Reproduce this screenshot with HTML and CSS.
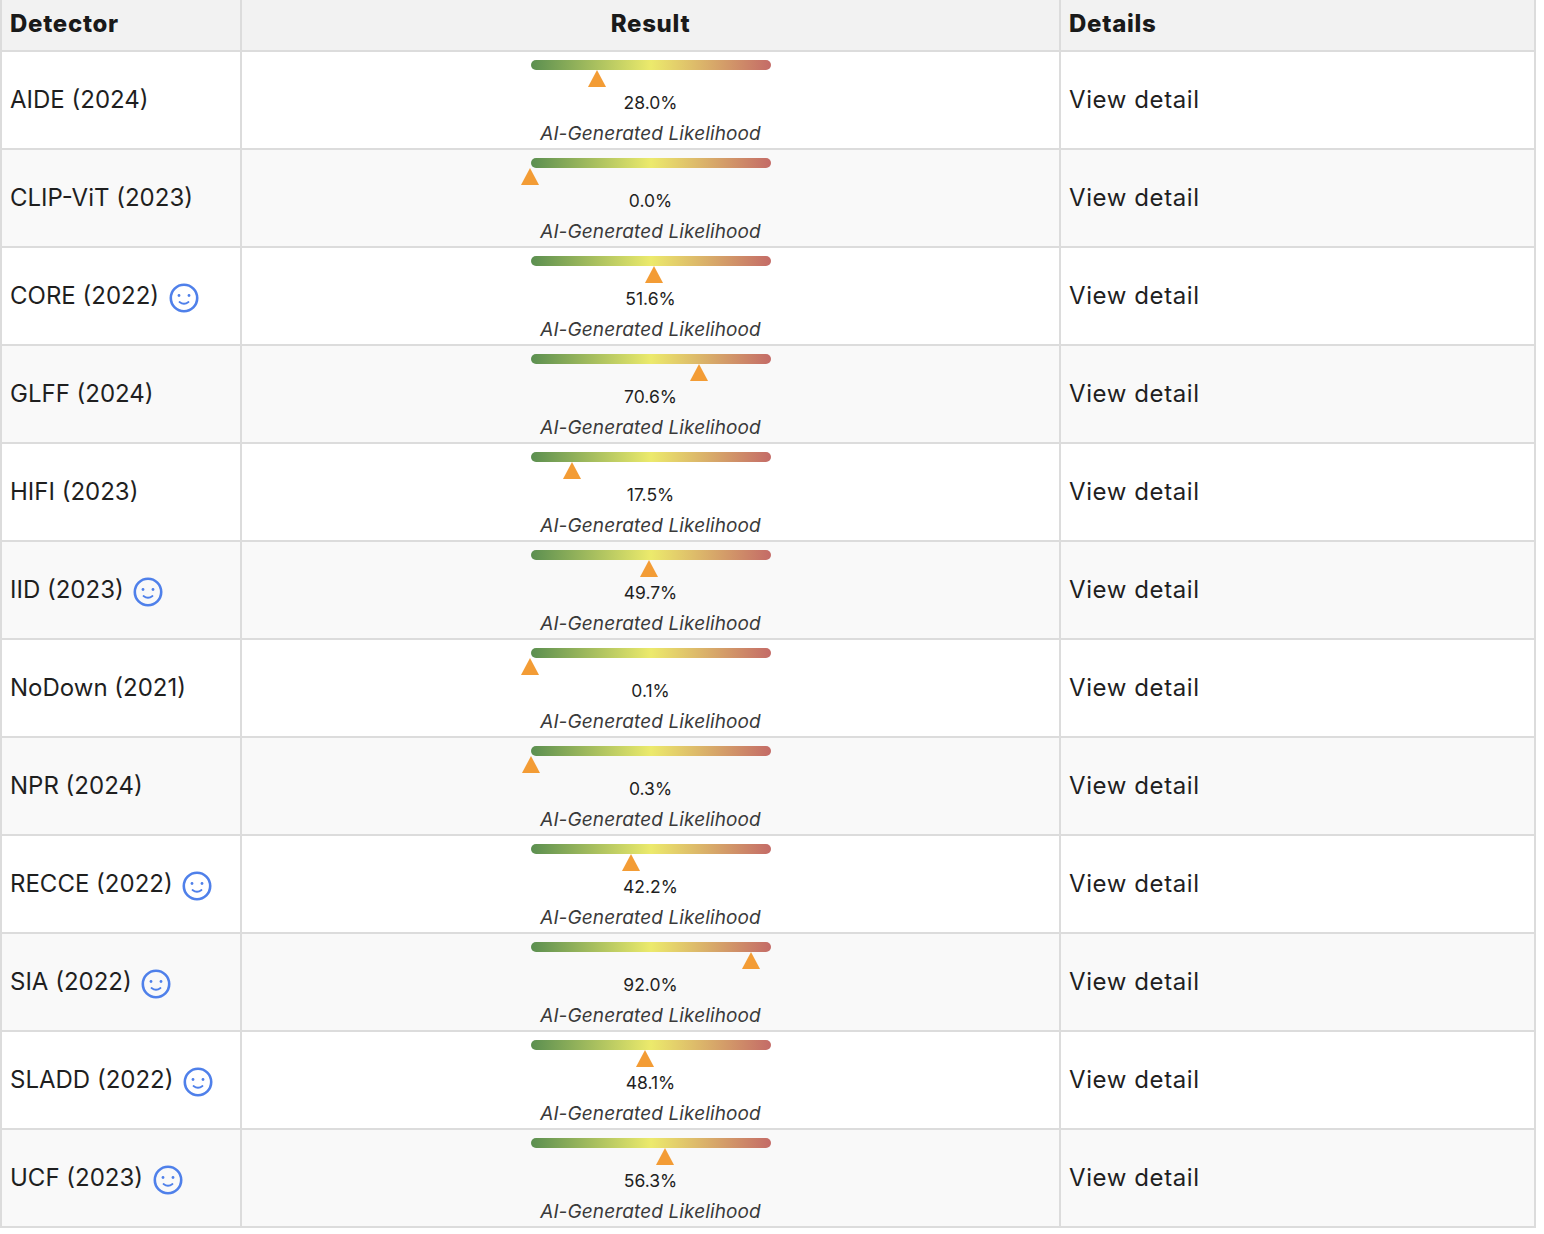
FILE: index.html
```html
<!DOCTYPE html>
<html lang="en">
<head>
<meta charset="utf-8">
<title>Detector results</title>
<link rel="stylesheet" href="styles.css">
</head>
<body>
<svg class="defs" width="0" height="0" aria-hidden="true"><defs><symbol id="smile" viewBox="0 0 30 30"><circle cx="15" cy="15" r="13.2" fill="none" stroke="currentColor" stroke-width="2.6"/><circle cx="10" cy="12.5" r="1.4" fill="currentColor"/><circle cx="20" cy="12.5" r="1.4" fill="currentColor"/><path d="M10.500 19q4.500 3.600 9 0" fill="none" stroke="currentColor" stroke-width="1.800" stroke-linecap="round"/></symbol></defs></svg>
<table class="results">
<thead><tr><th class="col-detector">Detector</th><th class="col-result">Result</th><th class="col-details">Details</th></tr></thead>
<tbody>
<tr><td class="name">AIDE (2024)</td><td class="result"><div class="meter"><div class="bar"></div><div class="marker-track"><span class="marker" style="left:28%"></span></div><div class="value">28.0%</div><div class="caption">AI-Generated Likelihood</div></div></td><td class="detail">View detail</td></tr>
<tr><td class="name">CLIP-ViT (2023)</td><td class="result"><div class="meter"><div class="bar"></div><div class="marker-track"><span class="marker" style="left:0%"></span></div><div class="value">0.0%</div><div class="caption">AI-Generated Likelihood</div></div></td><td class="detail">View detail</td></tr>
<tr><td class="name">CORE (2022)<svg class="smile"><use href="#smile"/></svg></td><td class="result"><div class="meter"><div class="bar"></div><div class="marker-track"><span class="marker" style="left:51.6%"></span></div><div class="value">51.6%</div><div class="caption">AI-Generated Likelihood</div></div></td><td class="detail">View detail</td></tr>
<tr><td class="name">GLFF (2024)</td><td class="result"><div class="meter"><div class="bar"></div><div class="marker-track"><span class="marker" style="left:70.6%"></span></div><div class="value">70.6%</div><div class="caption">AI-Generated Likelihood</div></div></td><td class="detail">View detail</td></tr>
<tr><td class="name">HIFI (2023)</td><td class="result"><div class="meter"><div class="bar"></div><div class="marker-track"><span class="marker" style="left:17.5%"></span></div><div class="value">17.5%</div><div class="caption">AI-Generated Likelihood</div></div></td><td class="detail">View detail</td></tr>
<tr><td class="name">IID (2023)<svg class="smile"><use href="#smile"/></svg></td><td class="result"><div class="meter"><div class="bar"></div><div class="marker-track"><span class="marker" style="left:49.7%"></span></div><div class="value">49.7%</div><div class="caption">AI-Generated Likelihood</div></div></td><td class="detail">View detail</td></tr>
<tr><td class="name">NoDown (2021)</td><td class="result"><div class="meter"><div class="bar"></div><div class="marker-track"><span class="marker" style="left:0.1%"></span></div><div class="value">0.1%</div><div class="caption">AI-Generated Likelihood</div></div></td><td class="detail">View detail</td></tr>
<tr><td class="name">NPR (2024)</td><td class="result"><div class="meter"><div class="bar"></div><div class="marker-track"><span class="marker" style="left:0.3%"></span></div><div class="value">0.3%</div><div class="caption">AI-Generated Likelihood</div></div></td><td class="detail">View detail</td></tr>
<tr><td class="name">RECCE (2022)<svg class="smile"><use href="#smile"/></svg></td><td class="result"><div class="meter"><div class="bar"></div><div class="marker-track"><span class="marker" style="left:42.2%"></span></div><div class="value">42.2%</div><div class="caption">AI-Generated Likelihood</div></div></td><td class="detail">View detail</td></tr>
<tr><td class="name">SIA (2022)<svg class="smile"><use href="#smile"/></svg></td><td class="result"><div class="meter"><div class="bar"></div><div class="marker-track"><span class="marker" style="left:92%"></span></div><div class="value">92.0%</div><div class="caption">AI-Generated Likelihood</div></div></td><td class="detail">View detail</td></tr>
<tr><td class="name">SLADD (2022)<svg class="smile"><use href="#smile"/></svg></td><td class="result"><div class="meter"><div class="bar"></div><div class="marker-track"><span class="marker" style="left:48.1%"></span></div><div class="value">48.1%</div><div class="caption">AI-Generated Likelihood</div></div></td><td class="detail">View detail</td></tr>
<tr><td class="name">UCF (2023)<svg class="smile"><use href="#smile"/></svg></td><td class="result"><div class="meter"><div class="bar"></div><div class="marker-track"><span class="marker" style="left:56.3%"></span></div><div class="value">56.3%</div><div class="caption">AI-Generated Likelihood</div></div></td><td class="detail">View detail</td></tr>
</tbody>
</table>
</body>
</html>
```

FILE: styles.css
```css
* { box-sizing: border-box; }
html, body { margin: 0; padding: 0; background: #fff; }
body { font-family: Inter, "Liberation Sans", sans-serif; color: #1f1f1f; }
.defs { position: absolute; }
.results {
  width: 1536px;
  table-layout: fixed;
  border-collapse: separate;
  border-spacing: 0;
  border-left: 2px solid #dcdcdc;
  border-right: 2px solid #dcdcdc;
}
.col-detector { width: 238px; }
.col-details { width: 475px; }
th, td {
  padding: 0 8px;
  border-bottom: 2px solid #dcdcdc;
  border-left: 2px solid #dcdcdc;
  text-align: left;
  vertical-align: middle;
}
th:first-child, td:first-child { border-left: 0; }
th {
  height: 52px;
  padding-bottom: 4px;
  background: #f2f2f2;
  font-size: 24px;
  font-weight: 800;
  letter-spacing: 0.7px;
  color: #1a1a1a;
}
.col-result { text-align: center; }
td { height: 98px; font-size: 24px; font-weight: 400; }
.name, .detail { padding-bottom: 2px; }
.detail { letter-spacing: 0.6px; }
tbody tr:nth-child(even) td { background: #f9f9f9; }
.smile { display: inline-block; width: 30px; height: 30px; margin: -8px 0 -8px 9.5px; vertical-align: -1px; color: #4f80ea; }
.result { padding: 8px 0 0; vertical-align: top; }
.meter { width: 240px; margin: 0 auto; display: flex; flex-direction: column; align-items: center; }
.bar { width: 100%; height: 10px; border-radius: 5px; background: linear-gradient(90deg, #5b8f50 0%, #ecea6c 50%, #c46b67 100%); }
.marker-track { position: relative; width: 100%; height: 17px; }
.marker { position: absolute; top: 0; width: 0; height: 0; margin-left: -9.5px; border-left: 9.5px solid transparent; border-right: 9.5px solid transparent; border-bottom: 17px solid #f39c35; }
.value { height: 32px; line-height: 32px; font-size: 17.5px; color: #1f1f1f; }
.caption { height: 29px; line-height: 29px; font-size: 19px; letter-spacing: 0.12px; font-style: italic; color: #3a3a3a; white-space: nowrap; }
```
